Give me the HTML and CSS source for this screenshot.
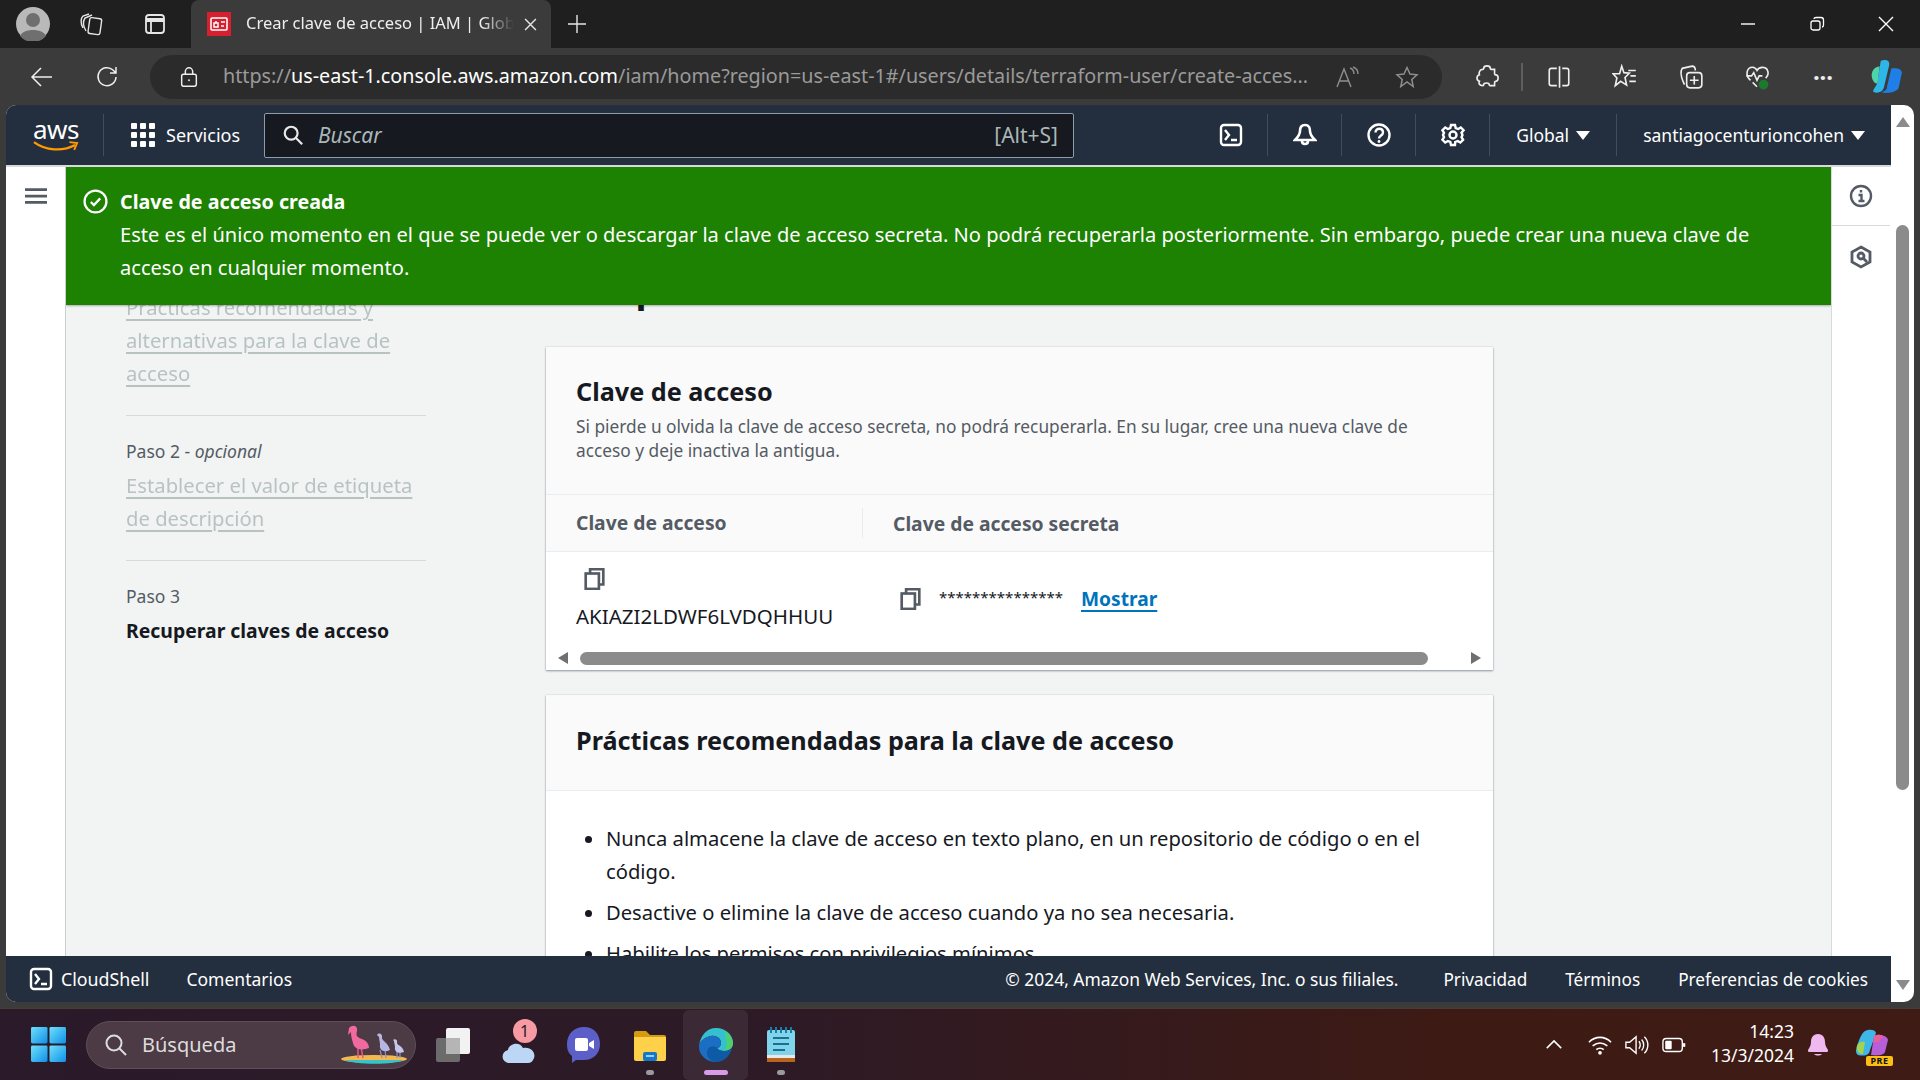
FILE: index.html
```html
<!DOCTYPE html>
<html lang="es">
<head>
    <meta charset="UTF-8">
    <title>Crear clave de acceso | IAM | Global</title>
    <link rel="stylesheet" href="styles.css">
</head>
<body>
    <div class="tabbar">
        <div class="tabbar-left">
            <svg class="avatar" viewBox="0 0 34 34"><circle cx="17" cy="17" r="17" fill="#b9b9b9"/><circle cx="17" cy="13" r="7" fill="#6f6f6f"/><path d="M4 29c3-8 23-8 26 0a17 17 0 0 1-26 0z" fill="#6f6f6f"/></svg>
            <svg class="ico tab-ico" viewBox="0 0 24 24" fill="none" stroke="#e6e6e6" stroke-width="1.4"><rect x="9" y="6" width="12" height="16" rx="2" transform="rotate(8 14 13)"/><path d="M6 19C3 14 3 9 5 6l7-3M3 16C0 11 1 6 3 4l6-2"/></svg>
            <svg class="ico tab-ico" viewBox="0 0 24 24" fill="none" stroke="#e6e6e6" stroke-width="1.8"><rect x="3" y="3" width="18" height="18" rx="3"/><path d="M3 8h18" stroke-width="4"/><path d="M8 9v12"/></svg>
        </div>
        <div class="tab">
            <span class="favicon"><svg viewBox="0 0 24 24" fill="none" stroke="#fff" stroke-width="1.5"><rect x="4" y="6" width="16" height="12" rx="1"/><rect x="7" y="11" width="4" height="4"/><path d="M9 9v2M14 10h4M14 14h3"/></svg></span>
            <span class="tab-title">Crear clave de acceso | IAM | Global</span>
            <svg class="tab-close" viewBox="0 0 12 12" stroke="#e6e6e6" stroke-width="1.3"><path d="M1 1l10 10M11 1L1 11"/></svg>
        </div>
        <svg class="new-tab" viewBox="0 0 20 20" stroke="#e6e6e6" stroke-width="1.4"><path d="M10 1v18M1 10h18"/></svg>
        <div class="win-controls">
            <svg viewBox="0 0 16 16" stroke="#fff" stroke-width="1.4"><path d="M1 8h14"/></svg>
            <svg viewBox="0 0 16 16" fill="none" stroke="#fff" stroke-width="1.3"><rect x="2" y="5" width="9" height="9" rx="2"/><path d="M5 3c0-1 1-1.500 2-1.500h5c1.500 0 2.500 1 2.500 2.500v5c0 1-.5 2-1.500 2"/></svg>
            <svg viewBox="0 0 16 16" stroke="#fff" stroke-width="1.4"><path d="M1 1l14 14M15 1L1 15"/></svg>
        </div>
    </div>

    <div class="toolbar">
        <svg class="ico nav-arrow" viewBox="0 0 24 24" fill="none" stroke="#eee" stroke-width="1.5"><path d="M22 12H2M11 3l-9 9 9 9"/></svg>
        <svg class="ico nav-reload" viewBox="0 0 24 24" fill="none" stroke="#eee" stroke-width="1.5"><path d="M20 12a9 9 0 1 1-3-7l3 3M20 2v6h-6"/></svg>
        <div class="omnibox">
            <svg class="ico lock" viewBox="0 0 24 24" fill="none" stroke="#eee" stroke-width="1.6"><rect x="4" y="9" width="16" height="13" rx="2"/><path d="M8 9V6a4 4 0 0 1 8 0v3"/><circle cx="12" cy="15.500" r="1" fill="#eee" stroke="none"/></svg>
            <span class="url"><span class="url-dim">https://</span>us-east-1.console.aws.amazon.com<span class="url-dim">/iam/home?region=us-east-1#/users/details/terraform-user/create-acces...</span></span>
            <svg class="ico read-aloud" viewBox="0 0 24 24" fill="none" stroke="#8e8e8e" stroke-width="1.4"><path d="M2 22L9 4l7 18M4.500 16h9M15 3c3 1 4 3 4 6M18 2c3 1 5 4 5 7"/></svg>
            <svg class="ico star" viewBox="0 0 24 24" fill="none" stroke="#8e8e8e" stroke-width="1.5"><path d="M12 2.500l3 6.500 7 .8-5.200 4.700 1.400 7L12 17l-6.200 4.500 1.400-7L2 9.800 9 9z"/></svg>
        </div>
        <div class="toolbar-tools">
            <svg class="ico" viewBox="0 0 24 24" fill="none" stroke="#eee" stroke-width="1.5"><path d="M9 4c0-3 6-3 6 0 0 1 0 1 1 1h3v4c0 1 1 1 1 1 3 0 3 6 0 6 0 0-1 0-1 1v3h-4c-1 0-1-1-1-1 0-2-5-2-5 0 0 0 0 1-1 1-3 0-4-2-3-4-3-1-3-5 0-6-1-3 1-5 3-5 1 0 1 0 1-1z"/></svg>
            <span class="tool-sep"></span>
            <svg class="ico" viewBox="0 0 24 24" fill="none" stroke="#eee" stroke-width="1.5"><path d="M10 4H5a2 2 0 0 0-2 2v12a2 2 0 0 0 2 2h5M15 4h4a2 2 0 0 1 2 2v12a2 2 0 0 1-2 2h-4M12.500 2v20"/></svg>
            <svg class="ico" viewBox="0 0 24 24" fill="none" stroke="#eee" stroke-width="1.5"><path d="M9 2l2 6 5 .5-4 4 1.500 7L8 16l-5 4 1.500-7L1 9h6zM15 6h7M17 11h5M16 16h6"/></svg>
            <svg class="ico" viewBox="0 0 24 24" fill="none" stroke="#eee" stroke-width="1.5"><rect x="8" y="8" width="14" height="14" rx="3"/><path d="M15 11v8M11 15h8M6 19c-2-4-4-8-3-13l1-2 9-2c2 0 3 1 3 4"/></svg>
            <svg class="ico" viewBox="0 0 24 24" fill="none" stroke="#eee" stroke-width="1.5"><path d="M6 15C1 11 2 3 8 3c2 0 3 1 4 3 2-4 9-4 10 1 1 3-1 5-2 6M2 11h5l2-3 3 7 2-4h3M8 17l4 4"/><circle cx="18" cy="19" r="4.500" fill="#1b7a2e" stroke="none"/></svg>
            <span class="dots">···</span>
            <svg class="ico copilot-edge" viewBox="0 0 34 34"><path d="M12 2c4-2 9-1 8 4L15 27c-1 4-6 6-10 4-1-2 4-6 4-10z" fill="#2fb6e8"/><path d="M4 12c1-3 4-5 7-5l-2 16c-3 1-7-5-5-11z" fill="#4fd3a8"/><path d="M22 9c4-1 10 0 10 4l-3 14c-1 3-5 5-12 5-3 0-5-1-5-1 4 0 6-2 6-5z" fill="#1f7fe6"/></svg>
        </div>
    </div>

    <div class="viewport">
        <div class="console">
            <header class="aws-nav">
                <div class="aws-logo">
                    <span class="aws-word">aws</span>
                    <svg viewBox="0 0 48 12" fill="none"><path d="M1 2c12 9 30 10 43 3" stroke="#f90" stroke-width="2.400"/><path d="M38 2l8 1-3 7" stroke="#f90" stroke-width="2"/></svg>
                </div>
                <span class="nav-sep"></span>
                <div class="services">
                    <span class="grid-ico"><i></i><i></i><i></i><i></i><i></i><i></i><i></i><i></i><i></i></span>
                    <span>Servicios</span>
                </div>
                <div class="nav-search">
                    <svg viewBox="0 0 24 24" fill="none" stroke="#e8e8e8" stroke-width="2.400"><circle cx="10" cy="10" r="7"/><path d="M15 15l7 7"/></svg>
                    <span class="search-ph">Buscar</span>
                    <span class="search-key">[Alt+S]</span>
                </div>
                <div class="nav-right">
                    <div class="nav-btn"><svg viewBox="0 0 24 24" fill="none" stroke="#fff" stroke-width="2.400"><rect x="2" y="2" width="20" height="20" rx="3"/><path d="M6 7l4 5-4 5M12 17h6"/></svg></div>
                    <div class="nav-btn"><svg viewBox="0 0 24 24" fill="none" stroke="#fff" stroke-width="2.600"><path d="M12 2c-4 0-5 3-5 6 0 4-2 6-5 9h20c-3-3-5-5-5-9 0-3-1-6-5-6zM9 18c0 4 6 4 6 0"/></svg></div>
                    <div class="nav-btn"><svg viewBox="0 0 24 24" fill="none" stroke="#fff" stroke-width="2.400"><circle cx="12" cy="12" r="10.500"/><path d="M8.500 9.500c0-5 7.500-5 7.500 0 0 3-4 3-4 6"/><circle cx="12" cy="18.500" r="1.400" fill="#fff" stroke="none"/></svg></div>
                    <div class="nav-btn"><svg viewBox="0 0 24 24" fill="none" stroke="#fff" stroke-width="2.400"><circle cx="12" cy="12" r="3.500"/><path d="M10 2h4l.7 3 2.500 1 2.600-1.600 2.800 2.800L20.500 9.800l1 2.200-1 2.200 1.600 2.600-2.800 2.800-2.600-1.600-2.500 1L14 22h-4l-.7-3-2.500-1-2.600 1.600-2.800-2.800 1.600-2.600-1-2.200 1-2.200L1.400 7.200l2.800-2.800L6.800 6l2.500-1z"/></svg></div>
                    <div class="nav-menu">Global <span class="caret"></span></div>
                    <div class="nav-menu">santiagocenturioncohen <span class="caret"></span></div>
                </div>
            </header>

            <div class="console-body">
                <aside class="rail-left">
                    <svg viewBox="0 0 24 18" stroke="#545b64" stroke-width="3"><path d="M0 2h24M0 9h24M0 16h24"/></svg>
                </aside>

                <main class="center">
                    <div class="flash">
                        <svg class="flash-ico" viewBox="0 0 24 24" fill="none" stroke="#fff" stroke-width="2.200"><circle cx="12" cy="12" r="10.500"/><path d="M7.500 12.500l3 3 6-6.500"/></svg>
                        <div>
                            <div class="flash-title">Clave de acceso creada</div>
                            <div class="flash-text">Este es el único momento en el que se puede ver o descargar la clave de acceso secreta. No podrá recuperarla posteriormente. Sin embargo, puede crear una nueva clave de acceso en cualquier momento.</div>
                        </div>
                    </div>

                    <nav class="steps">
                        <a class="step-link">Prácticas recomendadas y alternativas para la clave de acceso</a>
                        <hr>
                        <div class="step-num">Paso 2 - <em>opcional</em></div>
                        <a class="step-link">Establecer el valor de etiqueta de descripción</a>
                        <hr>
                        <div class="step-num">Paso 3</div>
                        <div class="step-current">Recuperar claves de acceso</div>
                    </nav>

                    <section class="cards">
                        <h1>Recuperar claves de acceso</h1>

                        <div class="card">
                            <div class="card-head">
                                <h2>Clave de acceso</h2>
                                <p>Si pierde u olvida la clave de acceso secreta, no podrá recuperarla. En su lugar, cree una nueva clave de acceso y deje inactiva la antigua.</p>
                            </div>
                            <div class="key-head">
                                <div class="key-col-a">Clave de acceso</div>
                                <div class="key-col-b">Clave de acceso secreta</div>
                            </div>
                            <div class="key-row">
                                <div class="key-col-a key-id">
                                    <svg class="copy-ico" viewBox="1 1 18 20" fill="none" stroke="#545b64" stroke-width="2.400"><rect x="2" y="6" width="12" height="14"/><path d="M6 6V2h12v14h-4"/></svg>
                                    <span>AKIAZI2LDWF6LVDQHHUU</span>
                                </div>
                                <div class="key-col-b key-secret">
                                    <svg class="copy-ico" viewBox="1 1 18 20" fill="none" stroke="#545b64" stroke-width="2.400"><rect x="2" y="6" width="12" height="14"/><path d="M6 6V2h12v14h-4"/></svg>
                                    <span class="stars">***************</span>
                                    <a class="show-link">Mostrar</a>
                                </div>
                            </div>
                            <div class="h-scroll">
                                <span class="arrow-left"></span>
                                <span class="h-thumb"></span>
                                <span class="arrow-right"></span>
                            </div>
                        </div>

                        <div class="card">
                            <div class="card-head card-head-line">
                                <h2>Prácticas recomendadas para la clave de acceso</h2>
                            </div>
                            <ul class="tips">
                                <li>Nunca almacene la clave de acceso en texto plano, en un repositorio de código o en el código.</li>
                                <li>Desactive o elimine la clave de acceso cuando ya no sea necesaria.</li>
                                <li>Habilite los permisos con privilegios mínimos.</li>
                            </ul>
                        </div>
                    </section>
                </main>

                <aside class="rail-right">
                    <div class="rail-cell">
                        <svg viewBox="0 0 24 24" fill="none" stroke="#545b64" stroke-width="2.400"><circle cx="12" cy="12" r="10"/><path d="M9.500 11H12.500v6M9.500 17h6M12 6v2.500"/></svg>
                    </div>
                    <div class="rail-cell">
                        <svg viewBox="0 0 24 24" fill="none" stroke="#545b64" stroke-width="2.800"><path d="M12 2l9 5v10l-9 5-9-5V7z"/><circle cx="12" cy="11" r="3"/><path d="M14 13l4 4"/></svg>
                    </div>
                </aside>
            </div>

            <footer class="aws-footer">
                <svg viewBox="0 0 24 24" fill="none" stroke="#fff" stroke-width="2.400"><rect x="2" y="2" width="20" height="20" rx="3"/><path d="M6 7l4 5-4 5M12 17h6"/></svg>
                <span class="foot-shell">CloudShell</span>
                <span class="foot-comments">Comentarios</span>
                <span class="foot-copy">© 2024, Amazon Web Services, Inc. o sus filiales.</span>
                <span class="foot-link foot-privacy">Privacidad</span>
                <span class="foot-link">Términos</span>
                <span class="foot-link">Preferencias de cookies</span>
            </footer>
        </div>

        <div class="v-scroll">
            <span class="arrow-up"></span>
            <span class="v-track"><span class="v-thumb"></span></span>
            <span class="arrow-down"></span>
        </div>
    </div>

    <div class="taskbar">
        <div class="task-left">
            <svg class="start" viewBox="0 0 36 36"><defs><linearGradient id="win" x1="0" y1="0" x2="1" y2="1"><stop offset="0" stop-color="#6fe0fb"/><stop offset="1" stop-color="#0f8fe8"/></linearGradient></defs><rect x="0" y="0" width="17" height="17" rx="1.500" fill="url(#win)"/><rect x="19" y="0" width="17" height="17" rx="1.500" fill="url(#win)"/><rect x="0" y="19" width="17" height="17" rx="1.500" fill="url(#win)"/><rect x="19" y="19" width="17" height="17" rx="1.500" fill="url(#win)"/></svg>
            <div class="task-search">
                <svg viewBox="0 0 24 24" fill="none" stroke="#ddd" stroke-width="2"><circle cx="10" cy="10" r="7.500"/><path d="M15.500 15.500L22 22"/></svg>
                <span>Búsqueda</span>
                <svg class="flamingo" viewBox="0 0 70 40"><ellipse cx="35" cy="34" rx="33" ry="4" fill="#f3b94f"/><path d="M6 35h58c-6 5-50 5-58 0z" fill="#38c3c9"/><path d="M19 33V22M24 33l-2-11" stroke="#e8558c" stroke-width="1.500"/><path d="M10 3c4-4 9-2 8 3-1 4-1 6 5 8 6 2 7 7 7 9-8 3-15 1-16-5-1-4-2-6-2-11l-3 3z" fill="#f06aa0"/><path d="M43 33l-2-8M47 33l-1-8" stroke="#8f8fc4" stroke-width="1.200"/><path d="M38 10c2-3 6-1 5 3 0 3 6 4 8 12-6 3-11 0-10-5 0-3-1-6-1-8z" fill="#b6b6e2"/><path d="M58 33v-7M61 33v-7" stroke="#8f8fc4" stroke-width="1.200"/><path d="M54 15c2-2 5 0 4 3 0 2 6 3 7 9-5 2-10 0-9-5 0-2-1-4-1-6z" fill="#c6c6ea"/></svg>
            </div>
            <div class="task-app"><svg viewBox="0 0 36 36"><rect x="1" y="11" width="24" height="24" rx="2" fill="#6b6b6b"/><rect x="11" y="1" width="24" height="26" rx="2" fill="#f2f2f2"/><rect x="11" y="11" width="14" height="16" fill="#b5b5b5"/></svg></div>
            <div class="task-app task-weather">
                <svg viewBox="0 0 36 32"><path d="M9 30c-9 0-10-11-2-13 1-7 12-9 15-2 8-2 13 5 11 10-1 3-3 5-6 5z" fill="#bcd6f5"/></svg>
                <span class="weather-badge">1</span>
            </div>
            <div class="task-app"><svg viewBox="0 0 36 38"><path d="M18 1c10 0 16 7 16 17s-7 16-16 16h-8l-4 3v-7C2 27 1 23 1 18 1 8 8 1 18 1z" fill="#5b5fc7"/><rect x="9" y="12" width="13" height="13" rx="2" fill="#fff"/><path d="M23 17l5-3v9l-5-3z" fill="#fff"/></svg></div>
            <div class="task-app"><svg viewBox="0 0 36 36"><path d="M2 6a2 2 0 0 1 2-2h10l4 4h14a2 2 0 0 1 2 2v4H2z" fill="#d39a12"/><path d="M2 10h32v22a2 2 0 0 1-2 2H4a2 2 0 0 1-2-2z" fill="#ffd04a"/><rect x="11" y="25" width="14" height="9" rx="2" fill="#1777c4"/><rect x="14" y="28" width="8" height="2" fill="#8fd0ff"/></svg><i class="run-dot"></i></div>
            <div class="task-app task-active"><svg viewBox="0 0 36 36"><path d="M18 1c10 0 17 7 17 15 0 5-4 8-9 8-3 0-6-1-7-3 2 0 4-2 4-5 0-5-5-8-10-7-6 1-11 5-12 9C3 8 9 1 18 1z" fill="#35c0d0"/><path d="M26 4c5 3 9 7 9 12 0 5-4 8-9 8 3-3 4-10 0-20z" fill="#4fd06f"/><path d="M1 18c1-4 6-8 12-9 5-1 10 2 10 7 0 3-2 5-4 5-3-2-8-2-9 2-2 5 2 11 10 12C9 36 0 28 1 18z" fill="#1a6fc4"/><path d="M10 23c1-4 6-4 9-2 1 2 4 3 7 3 3 0 6-1 8-3-2 8-8 14-16 14-8-1-10-7-8-12z" fill="#0e5aa7"/></svg><i class="run-dot run-dot-active"></i></div>
            <div class="task-app"><svg viewBox="0 0 36 38"><rect x="4" y="4" width="28" height="30" rx="2" fill="#7fd3ea"/><path d="M4 30h28v6H4z" fill="#b5651d"/><path d="M4 29h28v3H4z" fill="#e8e8e8"/><path d="M10 12h16M10 18h16M10 24h12" stroke="#1a6f8f" stroke-width="2"/><path d="M8 1v6M13 1v6M18 1v6M23 1v6M28 1v6" stroke="#157fa5" stroke-width="2"/></svg><i class="run-dot"></i></div>
        </div>
        <div class="task-right">
            <svg class="tray tray-chev" viewBox="0 0 20 12" fill="none" stroke="#fff" stroke-width="1.700"><path d="M2 10l8-8 8 8"/></svg>
            <svg class="tray" viewBox="0 0 26 22" fill="none" stroke="#fff" stroke-width="1.700"><path d="M1 8c7-7 17-7 24 0M5 12c5-4 11-4 16 0M9 16c2-2 6-2 8 0"/><circle cx="13" cy="19.500" r="2" fill="#fff" stroke="none"/></svg>
            <svg class="tray" viewBox="0 0 26 22" fill="none" stroke="#fff" stroke-width="1.500"><path d="M1 8h4l7-6v18l-7-6H1zM15 7c2 2 2 6 0 8M18 5c3 3 3 9 0 12M21 2c5 5 5 13 0 18"/></svg>
            <svg class="tray" viewBox="0 0 26 18" fill="none" stroke="#fff" stroke-width="1.500"><rect x="1" y="2" width="21" height="14" rx="3.500"/><rect x="3.500" y="4.500" width="7" height="9" rx="1" fill="#fff" stroke="none"/><path d="M24 7v4" stroke-width="2.400"/></svg>
            <div class="clock"><span>14:23</span><span>13/3/2024</span></div>
            <svg class="tray-bell" viewBox="0 0 22 24"><path d="M11 1c-5 0-7 4-7 8 0 4-2 6-3 8 0 1 0 2 1 2h18c1 0 1-1 1-2-1-2-3-4-3-8 0-4-2-8-7-8zM7 21c2 2 6 2 8 0z" fill="#efb8f0"/></svg>
            <div class="task-copilot">
                <svg viewBox="0 0 34 28"><path d="M10 2c4-2 10-2 11 2l-7 20c-2 3-7 3-11 2-3-2-2-6-1-9 2-6 4-12 8-15z" fill="#3fb6e8"/><path d="M2 17c1-4 5-5 8-4l-2 12c-3 1-7-3-6-8z" fill="#a5d34e"/><path d="M19 7c5-2 13-1 14 4l-3 12c-1 3-7 4-14 3z" fill="#b65fd8"/><path d="M19 7c3-2 6-2 9 0l-4 6h-6z" fill="#e85f9a"/></svg>
                <span class="pre-tag">PRE</span>
            </div>
        </div>
    </div>
</body>
</html>
```

FILE: styles.css
```css
* {
    box-sizing: border-box;
}
html, body {
    height: 100%;
}
body {
    margin: 0;
    height: 1080px;
    overflow: hidden;
    display: flex;
    flex-direction: column;
    font-family: "Noto Sans", sans-serif;
    background-color: #3b3b3b;
    color: #16191f;
}
svg {
    display: block;
    flex-shrink: 0;
}
.ico {
    width: 24px;
    height: 24px;
}

/* barra de pestañas */
.tabbar {
    height: 48px;
    background-color: #1f1f1f;
    display: flex;
    align-items: center;
    color: #eee;
}
.tabbar-left {
    width: 191px;
    padding-left: 16px;
    display: flex;
    align-items: center;
}
.avatar {
    width: 34px;
    height: 34px;
    margin-right: 30px;
}
.tab-ico + .tab-ico {
    margin-left: 39px;
}
.tab {
    width: 360px;
    height: 48px;
    background-color: #3b3b3b;
    border-radius: 8px 8px 0 0;
    display: flex;
    align-items: center;
    padding: 0 14px 0 16px;
}
.favicon {
    width: 24px;
    height: 24px;
    background-color: #d5202f;
    margin-right: 15px;
}
.tab-title {
    flex: 1;
    font-size: 16.500px;
    line-height: 22px;
    margin-top: -2px;
    white-space: nowrap;
    overflow: hidden;
    -webkit-mask-image: linear-gradient(to right, #000 88%, transparent);
    mask-image: linear-gradient(to right, #000 88%, transparent);
}
.tab-close {
    width: 13px;
    height: 13px;
    margin-left: 10px;
}
.new-tab {
    width: 20px;
    height: 20px;
    margin-left: 16px;
}
.win-controls {
    margin-left: auto;
    display: flex;
    gap: 53px;
    padding-right: 26px;
}
.win-controls svg {
    width: 16px;
    height: 16px;
}

/* barra de direcciones */
.toolbar {
    height: 57px;
    display: flex;
    align-items: center;
    padding-left: 30px;
}
.nav-reload {
    margin-left: 42px;
}
.omnibox {
    width: 1292px;
    height: 44px;
    margin-left: 30px;
    border-radius: 22px;
    background-color: #2b2b2b;
    display: flex;
    align-items: center;
    padding: 0 23px 0 28px;
}
.lock {
    width: 22px;
    height: 22px;
}
.url {
    margin-left: 23px;
    font-size: 19.760px;
    line-height: 26px;
    margin-top: -2px;
    white-space: nowrap;
    color: #fff;
}
.url-dim {
    color: #9a9a9a;
}
.read-aloud {
    margin-left: auto;
    margin-right: 36px;
}
.toolbar-tools {
    display: flex;
    align-items: center;
    gap: 22px;
    margin-left: 32px;
}
.toolbar-tools .ico {
    width: 26px;
    height: 26px;
}
.tool-sep {
    width: 2px;
    height: 28px;
    background-color: #5e5e5e;
    margin: 0 -1px;
}
.toolbar-tools .ico + .ico {
    margin-left: 18px;
}
.toolbar-tools .tool-sep + .ico {
    margin-left: 2px;
}
.dots {
    width: 26px;
    margin-left: 18px;
    font-size: 24px;
    line-height: 1;
    font-weight: 700;
    color: #eee;
    text-align: center;
}
.toolbar-tools .copilot-edge {
    width: 36px;
    height: 36px;
    margin-left: 10px;
}

/* consola */
.viewport {
    height: 897px;
    margin-left: 6px;
    display: flex;
}
.console {
    width: 1885px;
    display: flex;
    flex-direction: column;
    background-color: #fff;
    border-top-left-radius: 10px;
    border-bottom-left-radius: 10px;
    overflow: hidden;
}
.aws-nav {
    height: 62px;
    flex-shrink: 0;
    background-color: #232f3e;
    border-bottom: 2px solid #d5dbdb;
    display: flex;
    align-items: center;
    color: #fff;
    padding-left: 26px;
    font-size: 17.500px;
}
.aws-logo {
    width: 48px;
    display: flex;
    flex-direction: column;
    align-items: center;
}
.aws-word {
    font-size: 26px;
    line-height: 20px;
    letter-spacing: -.5px;
}
.aws-logo svg {
    width: 46px;
    height: 12px;
    margin-top: 1px;
}
.nav-sep {
    width: 1px;
    height: 42px;
    background-color: #414d5c;
    margin-left: 23px;
}
.services {
    display: flex;
    align-items: center;
    gap: 11px;
    margin-left: 27px;
    width: 133px;
    font-size: 18px;
}
.grid-ico {
    display: grid;
    grid-template-columns: repeat(3, 6px);
    gap: 3px;
}
.grid-ico i {
    width: 6px;
    height: 6px;
    background-color: #fff;
    border-radius: 1px;
}
.nav-search {
    width: 810px;
    height: 45px;
    background-color: #16191f;
    border: 1px solid #8d9bab;
    border-radius: 2px;
    display: flex;
    align-items: center;
    padding: 0 15px 0 17px;
}
.nav-search svg {
    width: 22px;
    height: 22px;
}
.search-ph {
    margin-left: 14px;
    font-style: italic;
    color: #aab7b8;
    font-size: 21px;
}
.search-key {
    margin-left: auto;
    color: #aab7b8;
    font-size: 21px;
}
.nav-right {
    margin-left: auto;
    display: flex;
    align-items: center;
    height: 42px;
}
.nav-btn {
    width: 74px;
    height: 42px;
    display: flex;
    align-items: center;
    justify-content: center;
    border-right: 1px solid #414d5c;
}
.nav-btn svg {
    width: 24px;
    height: 24px;
}
.nav-menu {
    height: 42px;
    display: flex;
    align-items: center;
    gap: 7px;
    white-space: nowrap;
    padding-left: 26px;
    padding-right: 26px;
}
.nav-btn + .nav-menu {
    border-right: 1px solid #414d5c;
}
.caret {
    width: 0;
    height: 0;
    border-left: 7px solid transparent;
    border-right: 7px solid transparent;
    border-top: 9px solid #fff;
}

.console-body {
    flex: 1;
    min-height: 0;
    display: flex;
}
.rail-left {
    width: 60px;
    flex-shrink: 0;
    border-right: 1px solid #c9cfd0;
    padding: 20px 0 0 19px;
}
.rail-left svg {
    width: 22px;
    height: 18px;
}
.center {
    flex: 1;
    min-width: 0;
    position: relative;
    background-color: #f2f3f3;
    overflow: hidden;
    display: flex;
    padding: 99px 0 0 60px;
    align-items: flex-start;
}

/* aviso verde, queda encima del contenido */
.flash {
    position: absolute;
    top: 0;
    left: 0;
    right: 0;
    height: 138px;
    z-index: 5;
    background-color: #1d8102;
    color: #fff;
    display: flex;
    padding: 18px 60px 0 17px;
    font-size: 20.080px;
    line-height: 33px;
    box-shadow: 0 1px 2px rgba(0, 0, 0, 0.3);
}
.flash-ico {
    width: 25px;
    height: 25px;
    margin: 4px 12px 0 0;
}
.flash-title {
    font-weight: 700;
    font-size: 19.700px;
}

/* pasos */
.steps {
    width: 300px;
    flex-shrink: 0;
    margin-top: 25px;
    font-size: 20.250px;
    line-height: 33px;
}
.steps hr {
    border: 0;
    border-top: 1px solid #d5dbdb;
    margin: 25px 0 19px;
}
.step-link {
    color: #aab7b8;
    text-decoration: underline;
    text-underline-offset: 4px;
    text-decoration-thickness: 2px;
    opacity: .8;
}
.step-num {
    font-size: 17.500px;
    line-height: 33px;
    margin-bottom: 1px;
    color: #545b64;
}
.step-current {
    font-weight: 700;
    font-size: 19.400px;
}

/* tarjetas */
.cards {
    width: 947px;
    margin-left: 120px;
    flex-shrink: 0;
}
h1 {
    margin: 0 0 37px;
    font-size: 37px;
    line-height: 44px;
    font-weight: 700;
    white-space: nowrap;
}
.card {
    background-color: #fff;
    box-shadow: 0 1px 2px rgba(0, 22, 44, 0.4), 0 0 1px rgba(0, 22, 44, 0.2);
    margin-bottom: 25px;
}
.card-head {
    background-color: #fafafa;
    padding: 27px 30px 31px;
    border-bottom: 1px solid #eaeded;
}
.card-head h2 {
    margin: 0;
    font-size: 25.200px;
    line-height: 34px;
    font-weight: 700;
}
.card-head p {
    margin: 7px 0 0;
    font-size: 17.300px;
    line-height: 24px;
    color: #545b64;
}
.card-head-line {
    padding: 28px 30px 33px;
}
.key-head {
    height: 57px;
    background-color: #fafafa;
    border-bottom: 1px solid #eaeded;
    display: flex;
    align-items: center;
    font-size: 19.300px;
    font-weight: 700;
    color: #545b64;
}
.key-col-a {
    width: 317px;
    padding-left: 30px;
}
.key-head .key-col-a {
    border-right: 1px solid #eaeded;
    height: 30px;
    line-height: 30px;
}
.key-col-b {
    padding-left: 30px;
}
.key-row {
    height: 94px;
    display: flex;
    align-items: center;
    font-size: 20.500px;
    line-height: 28px;
}
.key-id {
    display: flex;
    flex-direction: column;
    align-items: flex-start;
    gap: 12px;
}
.key-id .copy-ico {
    margin-left: 8px;
}
.copy-ico {
    width: 21px;
    height: 22px;
}
.key-secret {
    display: flex;
    align-items: center;
}
.key-secret .copy-ico {
    margin-left: 7px;
}
.stars {
    font-size: 15px;
    margin: -5px 0 0 18px;
    color: #16191f;
}
.show-link {
    margin-left: 18px;
    font-size: 19.200px;
    font-weight: 700;
    color: #0073bb;
    text-decoration: underline;
    text-underline-offset: 4px;
    text-decoration-thickness: 2px;
}
.h-scroll {
    height: 24px;
    display: flex;
    align-items: center;
    padding: 0 12px 0 12px;
}
.arrow-left {
    width: 0;
    height: 0;
    border-top: 6px solid transparent;
    border-bottom: 6px solid transparent;
    border-right: 10px solid #6f6f6f;
}
.arrow-right {
    width: 0;
    height: 0;
    margin-left: auto;
    border-top: 6px solid transparent;
    border-bottom: 6px solid transparent;
    border-left: 10px solid #6f6f6f;
}
.h-thumb {
    width: 848px;
    height: 13px;
    margin-left: 12px;
    border-radius: 7px;
    background-color: #8b8b8b;
}
.tips {
    margin: 0;
    padding: 31px 30px 0 60px;
    font-size: 20.200px;
    line-height: 33px;
}
.tips li {
    margin-bottom: 8px;
}

.rail-right {
    width: 60px;
    flex-shrink: 0;
    border-left: 1px solid #d5dbdb;
    padding-right: 1px;
}
.rail-cell {
    height: 62px;
    display: flex;
    align-items: center;
    justify-content: center;
}
.rail-cell:first-child {
    height: 59px;
    border-bottom: 1px solid #d5dbdb;
}
.rail-cell svg {
    width: 24px;
    height: 24px;
}

.aws-footer {
    height: 46px;
    flex-shrink: 0;
    background-color: #232f3e;
    color: #fff;
    display: flex;
    align-items: center;
    font-size: 17.500px;
    padding-left: 23px;
    padding-right: 23px;
}
.aws-footer svg {
    width: 24px;
    height: 24px;
    margin-right: 8px;
}
.foot-shell {
    font-size: 17.800px;
}
.foot-comments {
    margin-left: 37px;
}
.foot-copy {
    margin-left: auto;
    font-size: 17.400px;
}
.foot-link {
    margin-left: 38px;
    font-size: 17.200px;
}
.foot-privacy {
    margin-left: 45px;
}

/* barra de desplazamiento */
.v-scroll {
    width: 23px;
    background-color: #fff;
    border-radius: 0 10px 10px 0;
    display: flex;
    flex-direction: column;
    align-items: center;
    padding: 12px 0 12px;
}
.arrow-up, .arrow-down {
    width: 0;
    height: 0;
    flex-shrink: 0;
    border-left: 7px solid transparent;
    border-right: 7px solid transparent;
}
.arrow-up {
    border-bottom: 10px solid #8b8b8b;
}
.arrow-down {
    border-top: 10px solid #8b8b8b;
}
.v-track {
    flex: 1;
    padding-top: 98px;
}
.v-thumb {
    display: block;
    width: 13px;
    height: 565px;
    border-radius: 7px;
    background-color: #8b8b8b;
}

/* barra de tareas */
.taskbar {
    height: 72px;
    margin-top: 6px;
    flex-shrink: 0;
    background: linear-gradient(to right, #2a1a2a 0%, #2d1a26 40%, #3d1a14 75%, #3e1b14 100%);
    border-top: 1px solid #4a3a3a;
    display: flex;
    align-items: center;
    color: #fff;
}
.task-left {
    display: flex;
    align-items: center;
    padding-left: 31px;
}
.start {
    width: 35px;
    height: 35px;
    margin-right: 20px;
}
.task-search {
    width: 330px;
    height: 48px;
    border-radius: 24px;
    background-color: #4c3a44;
    border: 1px solid #5f4e58;
    display: flex;
    align-items: center;
    padding-left: 17px;
    font-size: 20px;
    color: #ddd;
    margin-right: 4px;
}
.task-search > svg:first-child {
    width: 24px;
    height: 24px;
    margin-right: 14px;
}
.flamingo {
    width: 70px;
    height: 40px;
    margin-left: auto;
    margin-right: 6px;
}
.task-app {
    width: 65.700px;
    height: 70px;
    display: flex;
    align-items: center;
    justify-content: center;
    position: relative;
}
.task-app svg {
    width: 36px;
    height: 38px;
}
.task-weather svg {
    height: 32px;
    margin-top: 8px;
}
.weather-badge {
    position: absolute;
    top: 9px;
    left: 27px;
    width: 24px;
    height: 24px;
    border-radius: 50%;
    background-color: #f79aa4;
    color: #222;
    font-size: 16px;
    line-height: 24px;
    text-align: center;
}
.task-active {
    background-color: rgba(255, 255, 255, 0.07);
    border-radius: 6px;
}
.run-dot {
    position: absolute;
    bottom: 5px;
    left: 50%;
    width: 8px;
    height: 5px;
    margin-left: -4px;
    border-radius: 3px;
    background-color: #9a9a9a;
}
.run-dot-active {
    width: 24px;
    margin-left: -12px;
    background-color: #d89be8;
}
.task-right {
    margin-left: auto;
    display: flex;
    align-items: center;
    padding-right: 29px;
}
.tray {
    width: 24px;
    height: 22px;
    margin-right: 13px;
}
.tray-chev {
    width: 18px;
    height: 11px;
    margin-right: 25px;
}
.clock {
    display: flex;
    flex-direction: column;
    align-items: flex-end;
    font-size: 17.500px;
    line-height: 24px;
    margin-left: 12px;
    margin-top: -3px;
}
.tray-bell {
    width: 22px;
    height: 24px;
    margin-left: 13px;
}
.task-copilot {
    position: relative;
    width: 36px;
    height: 32px;
    margin-left: 26px;
}
.task-copilot svg {
    width: 34px;
    height: 28px;
}
.pre-tag {
    position: absolute;
    right: -2px;
    bottom: -5px;
    width: 27px;
    height: 10px;
    border-radius: 2px;
    background-color: #fcbf15;
    color: #111;
    font-size: 9px;
    line-height: 10px;
    font-weight: 700;
    text-align: center;
    letter-spacing: .5px;
}
```
